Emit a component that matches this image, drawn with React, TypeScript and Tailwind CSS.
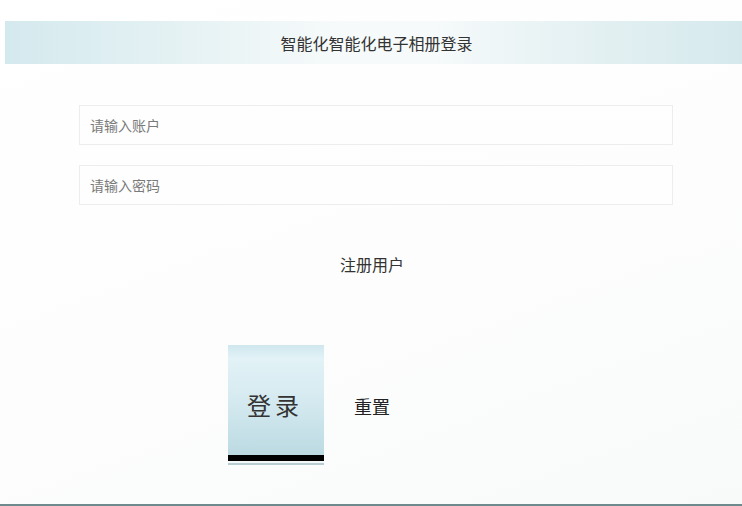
export default function App() {
  return (
    <div
      className="relative flex h-[506px] w-full flex-col overflow-hidden border-b-2 border-[#6f8a8c] bg-[linear-gradient(160deg,#ffffff_0%,#fdfdfd_55%,#f8fafa_100%)]"
      style={{ fontFamily: '"Noto Sans CJK SC", "Noto Sans", sans-serif' }}
    >
      {/* Title bar */}
      <div className="ml-[5px] mt-[21px] flex h-[43px] items-center justify-center bg-[linear-gradient(to_right,#d4e9ee_0%,#e6f2f4_25%,#f6fafa_45%,#f6fafa_58%,#e5f1f3_78%,#d5e9ed_100%)] pl-[6px]">
        <span className="text-[16px] text-[#333]">智能化智能化电子相册登录</span>
      </div>

      {/* Inputs */}
      <div className="mt-[41px] flex flex-col gap-[20px] pl-[79px] pr-[69px]">
        <input
          className="h-[40px] border border-[#ededed] bg-[#fefefe] px-[10px] text-[14px] text-[#333] outline-none placeholder:text-[#7a7a7a]"
          placeholder="请输入账户"
        />
        <input
          type="password"
          className="h-[40px] border border-[#ededed] bg-[#fefefe] px-[10px] text-[14px] text-[#333] outline-none placeholder:text-[#7a7a7a]"
          placeholder="请输入密码"
        />
      </div>

      {/* Register link */}
      <div className="mt-[47px] flex justify-center pl-[2px]">
        <span className="text-[16px] text-[#333]">注册用户</span>
      </div>

      {/* Buttons */}
      <div className="mt-[69px] flex items-center pl-[228px]">
        <button className="flex w-[96px] flex-col">
          <span className="flex h-[110px] items-center justify-center bg-[linear-gradient(to_bottom,#cfe7ee_0%,#e2f2f6_12%,#d5eaf0_50%,#bcdae2_100%)] pr-[2px] pt-[10px] text-[24px] tracking-[4px] text-[#333]">
            登录
          </span>
          <span className="h-[6px] bg-black" />
          <span className="h-[2px] bg-[#f4f7f7]" />
          <span className="h-[2px] bg-[#b7cdd2]" />
        </button>
        <button className="ml-[30px] mt-[2px] text-[18px] text-[#222]">重置</button>
      </div>
    </div>
  );
}
